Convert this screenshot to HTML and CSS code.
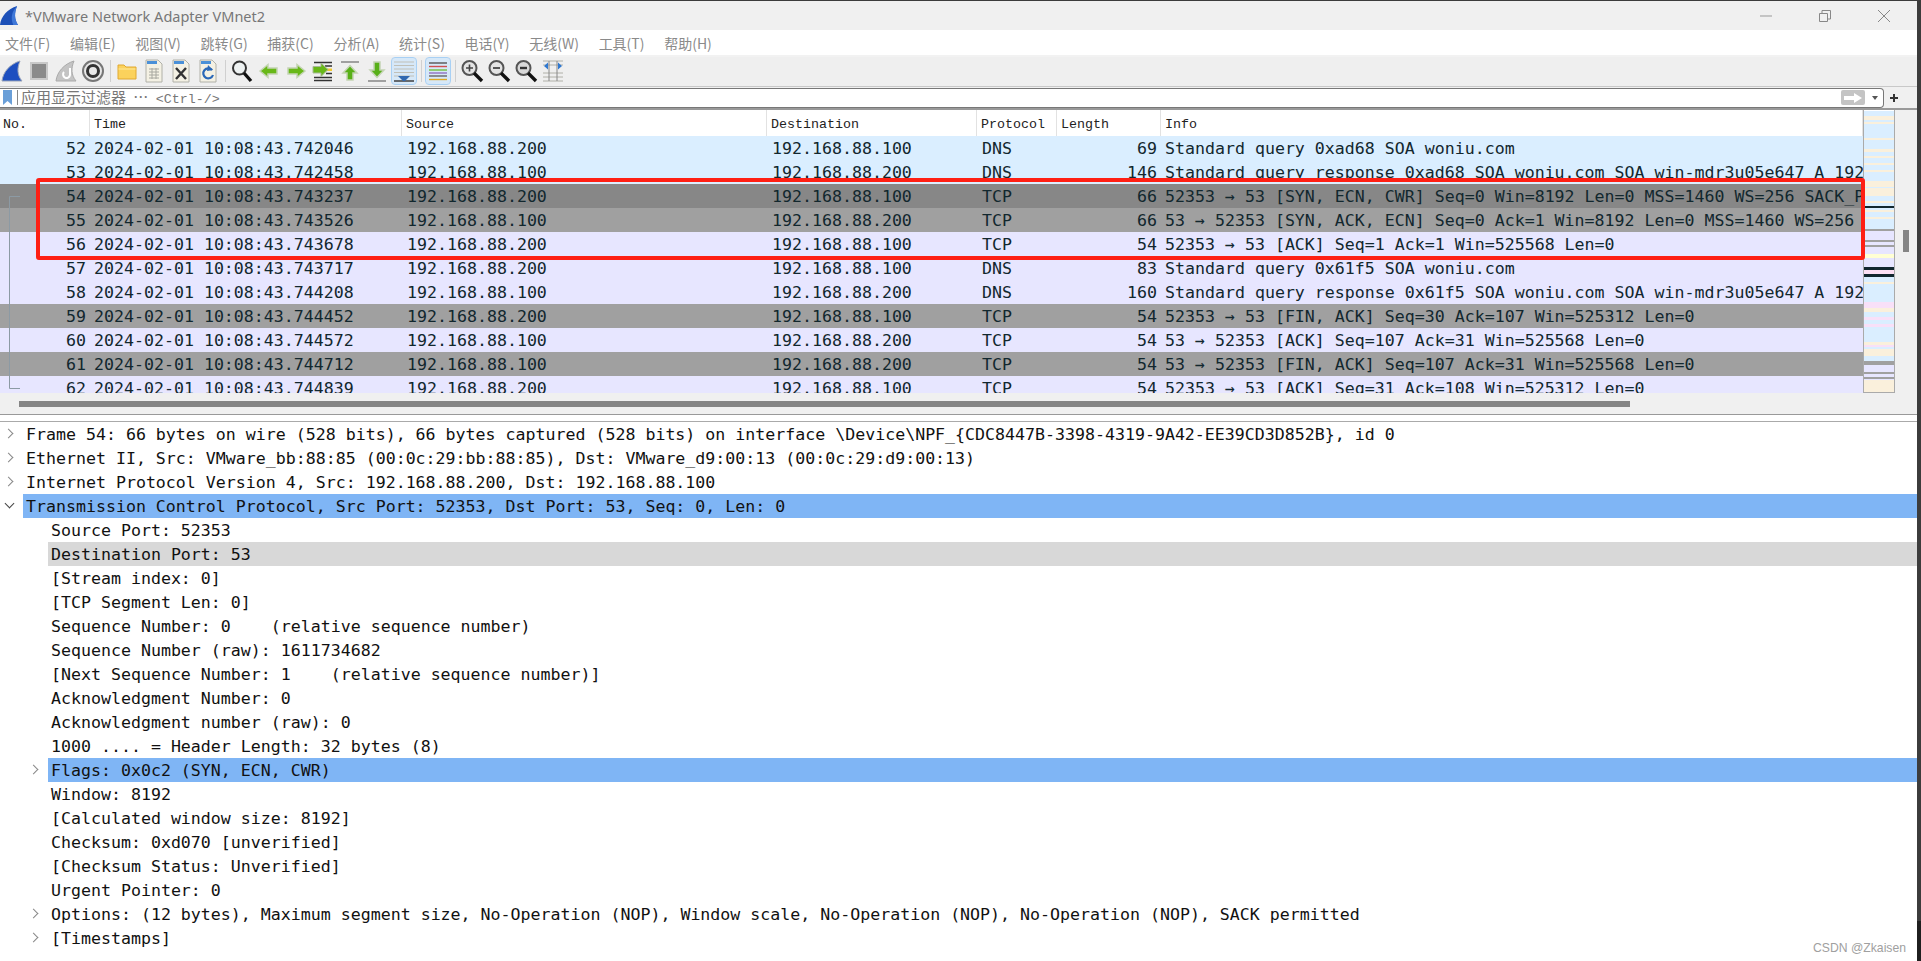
FILE: index.html
```html
<!DOCTYPE html>
<html>
<head>
    <title>VMware Network Adapter VMnet2</title>
    <link rel="stylesheet" href="styles.css">
</head>
<body>
<div class="window">
    <div class="titlebar">
        <svg class="app-icon" viewBox="0 0 20 22"><path d="M0 21C1 12 8 4 18 1C15 8 15 15 19 21Z" fill="#1c50b8"/><path d="M18 1C15 8 15 15 19 21H14C11 14 12 7 18 1Z" fill="#3f78d8"/></svg>
        <span class="title-text">*VMware Network Adapter VMnet2</span>
        <div class="win-controls">
            <svg viewBox="0 0 14 14"><path d="M1 7H13" stroke="#999" fill="none"/></svg>
            <svg viewBox="0 0 14 14"><path d="M1.5 4.5H9.5V12.5H1.5ZM4 4V1.5H12.5V10H10" stroke="#888" fill="none"/></svg>
            <svg viewBox="0 0 14 14"><path d="M1 1L13 13M13 1L1 13" stroke="#888" fill="none"/></svg>
        </div>
    </div>

    <div class="menubar">
        <span>文件(F)</span><span>编辑(E)</span><span>视图(V)</span><span>跳转(G)</span><span>捕获(C)</span><span>分析(A)</span><span>统计(S)</span><span>电话(Y)</span><span>无线(W)</span><span>工具(T)</span><span>帮助(H)</span>
    </div>

    <div class="toolbar">
        <svg class="ico" viewBox="0 0 24 24"><path d="M2 22C3 13 10 5 20 2C17 9 17 16 22 22Z" fill="#1d4fc0" stroke="#9aa4b8"/></svg>
        <svg class="ico" viewBox="0 0 24 24"><rect x="4" y="4" width="16" height="16" fill="#8a8a8a" stroke="#c8c8c8" stroke-width="2"/></svg>
        <svg class="ico" viewBox="0 0 24 24"><path d="M2 22C3 13 10 5 20 2C17 9 17 16 22 22Z" fill="#c4c4c4" stroke="#aaa"/><path d="M16 9V16A3.5 3.5 0 1 1 10 13" stroke="#fff" stroke-width="2" fill="none"/></svg>
        <svg class="ico" viewBox="0 0 24 24"><circle cx="12" cy="12" r="10" fill="#e8e8e8" stroke="#777" stroke-width="2"/><circle cx="12" cy="12" r="5.500" fill="#e8e8e8" stroke="#333" stroke-width="3"/></svg>
        <i class="sep"></i>
        <svg class="ico" viewBox="0 0 24 24"><path d="M3 6H9L11 8H21V20H3Z" fill="#fbd25c" stroke="#e0a830"/><path d="M3.500 10H20.500" stroke="#fde79a"/></svg>
        <svg class="ico" viewBox="0 0 24 24"><path d="M4 1H16L20 5V23H4Z" fill="#f4f1e4" stroke="#b0b0a8"/><path d="M5 2H15V5H5Z" fill="#4a90d8"/><path d="M7 10H17M7 13H17M7 16H17M7 19H17M10 9V20M14 9V20" stroke="#a8a8a0"/></svg>
        <svg class="ico" viewBox="0 0 24 24"><path d="M4 1H16L20 5V23H4Z" fill="#f4f1e4" stroke="#b0b0a8"/><path d="M5 2H15V5H5Z" fill="#4a90d8"/><path d="M7 9L17 20M17 9L7 20" stroke="#333" stroke-width="2.400"/></svg>
        <svg class="ico" viewBox="0 0 24 24"><path d="M4 1H16L20 5V23H4Z" fill="#f4f1e4" stroke="#b0b0a8"/><path d="M5 2H15V5H5Z" fill="#4a90d8"/><path d="M16 11A5 5 0 1 0 17 16" stroke="#2a68b8" stroke-width="2.200" fill="none"/><path d="M12 6L17 11L11 12Z" fill="#2a68b8"/></svg>
        <i class="sep"></i>
        <svg class="ico" viewBox="0 0 24 24"><circle cx="9.500" cy="9" r="6.500" fill="#eef2f2" stroke="#333" stroke-width="2"/><path d="M14 14L21 22" stroke="#111" stroke-width="3.400"/></svg>
        <svg class="ico" viewBox="0 0 24 24"><path d="M3 12L11 5.500V9H20V15H11V18.500Z" fill="#68b818" stroke="#c4d4b4" stroke-width="1.500"/></svg>
        <svg class="ico" viewBox="0 0 24 24"><path d="M21 12L13 5.500V9H4V15H13V18.500Z" fill="#68b818" stroke="#c4d4b4" stroke-width="1.500"/></svg>
        <svg class="ico" viewBox="0 0 24 24"><path d="M3 3.500H21M3 18.500H21M3 21.500H21M14 7H21M15 14.500H21" stroke="#333" stroke-width="1.400"/><path d="M16 9.500H21V12H16Z" fill="#f0c830"/><path d="M17 10.500L10 4V7.500H2V14H10V17.500Z" fill="#68b818" stroke="#a8b898"/></svg>
        <svg class="ico" viewBox="0 0 24 24"><path d="M3 3H21" stroke="#a0a0a0" stroke-width="2"/><path d="M12 6.500L19 14H15V21H9V14H5Z" fill="#58b018" stroke="#c4d4b4" stroke-width="1.500"/></svg>
        <svg class="ico" viewBox="0 0 24 24"><path d="M3 22H21" stroke="#a0a0a0" stroke-width="2"/><path d="M12 18.500L19 11H15V3H9V11H5Z" fill="#58b018" stroke="#c4d4b4" stroke-width="1.500"/></svg>
        <div class="tool-toggle auto-scroll">
            <svg class="ico" viewBox="0 0 24 24"><path d="M2 3H22M2 6.500H22M2 10H22M2 13.500H22M2 17H22" stroke="#c0c0b8"/><path d="M2 22H22" stroke="#333" stroke-width="1.400"/><path d="M11 22L6 17H18L13 22Z" fill="#3068b0"/></svg>
        </div>
        <i class="sep"></i>
        <div class="tool-toggle colorize">
            <svg class="ico" viewBox="0 0 24 24"><path d="M3 4H21" stroke="#555" stroke-width="1.400"/><path d="M3 7.500H21" stroke="#d05050" stroke-width="1.400"/><path d="M3 11H21" stroke="#70c040" stroke-width="1.400"/><path d="M3 14H21" stroke="#9070c0" stroke-width="1.400"/><path d="M3 17H21" stroke="#666" stroke-width="1.400"/><path d="M3 20.500H21" stroke="#e0a820" stroke-width="1.400"/></svg>
        </div>
        <i class="sep"></i>
        <svg class="ico" viewBox="0 0 24 24"><circle cx="9.500" cy="9" r="7" fill="#e4e4e4" stroke="#555" stroke-width="2"/><path d="M6 9H13M9.500 5.500V12.500" stroke="#444" stroke-width="1.600"/><path d="M14 14L22 22" stroke="#111" stroke-width="3.400"/></svg>
        <svg class="ico" viewBox="0 0 24 24"><circle cx="9.500" cy="9" r="7" fill="#e4e4e4" stroke="#555" stroke-width="2"/><path d="M6 9H13" stroke="#444" stroke-width="1.800"/><path d="M14 14L22 22" stroke="#111" stroke-width="3.400"/></svg>
        <svg class="ico" viewBox="0 0 24 24"><circle cx="9.500" cy="9" r="7" fill="#d8d8d8" stroke="#555" stroke-width="2"/><path d="M6 9H13" stroke="#333" stroke-width="2.400"/><path d="M14 14L22 22" stroke="#111" stroke-width="3.400"/></svg>
        <svg class="ico" viewBox="0 0 24 24"><path d="M2 2H22M2 22H22M2 6H22M2 18H22M2 14H22" stroke="#b0b0a8"/><path d="M8 2V22M16 2V22" stroke="#888"/><path d="M3 7L7 3.500V10.500Z M21 7L17 3.500V10.500Z" fill="#2f78d0"/></svg>
    </div>

    <div class="filter-row">
        <div class="filter-box">
            <svg class="bookmark" viewBox="0 0 9 15"><path d="M0 0H9V15L4.500 11L0 15Z" fill="#6a9fd8"/></svg>
            <span class="filter-hint"><span class="cjk">应用显示过滤器 ⋯ </span>&lt;Ctrl-/&gt;</span>
            <span class="apply-btn"><svg viewBox="0 0 18 10"><path d="M0 3H10V0L18 5L10 10V7H0Z" fill="#fff"/></svg></span>
            <i class="drop-arrow"></i>
        </div>
        <svg class="plus" viewBox="0 0 10 10"><path d="M5 1V9M1 5H9" stroke="#333" stroke-width="2"/></svg>
    </div>

    <div class="packet-pane">
        <div class="packet-main">
            <div class="pk-head">
                <span class="c-no">No.</span><span class="c-time">Time</span><span class="c-src">Source</span><span class="c-dst">Destination</span><span class="c-proto">Protocol</span><span class="c-len">Length</span><span class="c-info">Info</span>
            </div>
            <div class="pk-body">
                <div class="pk-row dns-blue"><span class="c-no">52</span><span class="c-time">2024-02-01 10:08:43.742046</span><span class="c-src">192.168.88.200</span><span class="c-dst">192.168.88.100</span><span class="c-proto">DNS</span><span class="c-len">69</span><span class="c-info">Standard query 0xad68 SOA woniu.com</span></div>
                <div class="pk-row dns-blue"><span class="c-no">53</span><span class="c-time">2024-02-01 10:08:43.742458</span><span class="c-src">192.168.88.100</span><span class="c-dst">192.168.88.200</span><span class="c-proto">DNS</span><span class="c-len">146</span><span class="c-info">Standard query response 0xad68 SOA woniu.com SOA win-mdr3u05e647 A 192.168.88.100</span></div>
                <div class="pk-row tcp-sel"><span class="c-no">54</span><span class="c-time">2024-02-01 10:08:43.743237</span><span class="c-src">192.168.88.200</span><span class="c-dst">192.168.88.100</span><span class="c-proto">TCP</span><span class="c-len">66</span><span class="c-info">52353 → 53 [SYN, ECN, CWR] Seq=0 Win=8192 Len=0 MSS=1460 WS=256 SACK_PERM</span></div>
                <div class="pk-row tcp-flag"><span class="c-no">55</span><span class="c-time">2024-02-01 10:08:43.743526</span><span class="c-src">192.168.88.100</span><span class="c-dst">192.168.88.200</span><span class="c-proto">TCP</span><span class="c-len">66</span><span class="c-info">53 → 52353 [SYN, ACK, ECN] Seq=0 Ack=1 Win=8192 Len=0 MSS=1460 WS=256</span></div>
                <div class="pk-row tcp"><span class="c-no">56</span><span class="c-time">2024-02-01 10:08:43.743678</span><span class="c-src">192.168.88.200</span><span class="c-dst">192.168.88.100</span><span class="c-proto">TCP</span><span class="c-len">54</span><span class="c-info">52353 → 53 [ACK] Seq=1 Ack=1 Win=525568 Len=0</span></div>
                <div class="pk-row tcp"><span class="c-no">57</span><span class="c-time">2024-02-01 10:08:43.743717</span><span class="c-src">192.168.88.200</span><span class="c-dst">192.168.88.100</span><span class="c-proto">DNS</span><span class="c-len">83</span><span class="c-info">Standard query 0x61f5 SOA woniu.com</span></div>
                <div class="pk-row tcp"><span class="c-no">58</span><span class="c-time">2024-02-01 10:08:43.744208</span><span class="c-src">192.168.88.100</span><span class="c-dst">192.168.88.200</span><span class="c-proto">DNS</span><span class="c-len">160</span><span class="c-info">Standard query response 0x61f5 SOA woniu.com SOA win-mdr3u05e647 A 192.168.88.100</span></div>
                <div class="pk-row tcp-flag"><span class="c-no">59</span><span class="c-time">2024-02-01 10:08:43.744452</span><span class="c-src">192.168.88.200</span><span class="c-dst">192.168.88.100</span><span class="c-proto">TCP</span><span class="c-len">54</span><span class="c-info">52353 → 53 [FIN, ACK] Seq=30 Ack=107 Win=525312 Len=0</span></div>
                <div class="pk-row tcp"><span class="c-no">60</span><span class="c-time">2024-02-01 10:08:43.744572</span><span class="c-src">192.168.88.100</span><span class="c-dst">192.168.88.200</span><span class="c-proto">TCP</span><span class="c-len">54</span><span class="c-info">53 → 52353 [ACK] Seq=107 Ack=31 Win=525568 Len=0</span></div>
                <div class="pk-row tcp-flag"><span class="c-no">61</span><span class="c-time">2024-02-01 10:08:43.744712</span><span class="c-src">192.168.88.100</span><span class="c-dst">192.168.88.200</span><span class="c-proto">TCP</span><span class="c-len">54</span><span class="c-info">53 → 52353 [FIN, ACK] Seq=107 Ack=31 Win=525568 Len=0</span></div>
                <div class="pk-row tcp"><span class="c-no">62</span><span class="c-time">2024-02-01 10:08:43.744839</span><span class="c-src">192.168.88.200</span><span class="c-dst">192.168.88.100</span><span class="c-proto">TCP</span><span class="c-len">54</span><span class="c-info">52353 → 53 [ACK] Seq=31 Ack=108 Win=525312 Len=0</span></div>
                <svg class="conv-line" viewBox="0 0 20 197"><path d="M20 .5H9.500V192.500H20" fill="none" stroke="#8c9aa4"/></svg>
            </div>
            <div class="h-scroll"><i class="h-thumb"></i></div>
        </div>
        <div class="minimap"></div>
        <div class="v-scroll"><i class="v-thumb"></i></div>
        <div class="red-mark"></div>
    </div>

    <div class="detail-pane">
        <div class="tr"><i class="chev right"></i><span>Frame 54: 66 bytes on wire (528 bits), 66 bytes captured (528 bits) on interface \Device\NPF_{CDC8447B-3398-4319-9A42-EE39CD3D852B}, id 0</span></div>
        <div class="tr"><i class="chev right"></i><span>Ethernet II, Src: VMware_bb:88:85 (00:0c:29:bb:88:85), Dst: VMware_d9:00:13 (00:0c:29:d9:00:13)</span></div>
        <div class="tr"><i class="chev right"></i><span>Internet Protocol Version 4, Src: 192.168.88.200, Dst: 192.168.88.100</span></div>
        <div class="tr picked"><i class="chev down"></i><span>Transmission Control Protocol, Src Port: 52353, Dst Port: 53, Seq: 0, Len: 0</span></div>
        <div class="tr sub"><i class="chev none"></i><span>Source Port: 52353</span></div>
        <div class="tr sub hover"><i class="chev none"></i><span>Destination Port: 53</span></div>
        <div class="tr sub"><i class="chev none"></i><span>[Stream index: 0]</span></div>
        <div class="tr sub"><i class="chev none"></i><span>[TCP Segment Len: 0]</span></div>
        <div class="tr sub"><i class="chev none"></i><span>Sequence Number: 0    (relative sequence number)</span></div>
        <div class="tr sub"><i class="chev none"></i><span>Sequence Number (raw): 1611734682</span></div>
        <div class="tr sub"><i class="chev none"></i><span>[Next Sequence Number: 1    (relative sequence number)]</span></div>
        <div class="tr sub"><i class="chev none"></i><span>Acknowledgment Number: 0</span></div>
        <div class="tr sub"><i class="chev none"></i><span>Acknowledgment number (raw): 0</span></div>
        <div class="tr sub"><i class="chev none"></i><span>1000 .... = Header Length: 32 bytes (8)</span></div>
        <div class="tr sub picked"><i class="chev right"></i><span>Flags: 0x0c2 (SYN, ECN, CWR)</span></div>
        <div class="tr sub"><i class="chev none"></i><span>Window: 8192</span></div>
        <div class="tr sub"><i class="chev none"></i><span>[Calculated window size: 8192]</span></div>
        <div class="tr sub"><i class="chev none"></i><span>Checksum: 0xd070 [unverified]</span></div>
        <div class="tr sub"><i class="chev none"></i><span>[Checksum Status: Unverified]</span></div>
        <div class="tr sub"><i class="chev none"></i><span>Urgent Pointer: 0</span></div>
        <div class="tr sub"><i class="chev right"></i><span>Options: (12 bytes), Maximum segment size, No-Operation (NOP), Window scale, No-Operation (NOP), No-Operation (NOP), SACK permitted</span></div>
        <div class="tr sub"><i class="chev right"></i><span>[Timestamps]</span></div>
    </div>
    <div class="watermark">CSDN @Zkaisen</div>
</div>
</body>
</html>
```

FILE: styles.css
```css
html, body {
    margin: 0;
    height: 100%;
    overflow: hidden;
    background: linear-gradient(to bottom, #3c3c3c 0 921px, #1f1f1f 921px);
}
.window {
    position: relative;
    width: 1917px;
    height: 960px;
    margin-top: 1px;
    background: #fff;
    overflow: hidden;
    font-family: "DejaVu Sans Mono", monospace;
    font-size: 16.6px;
    color: #111;
}

/* title + menu */
.titlebar {
    height: 29px;
    background: #f0f0f0;
    display: flex;
    align-items: center;
}
.app-icon {
    width: 19px;
    height: 21px;
    margin-left: 0;
}
.title-text {
    margin-left: 6px;
    font: 14.5px "Noto Sans", sans-serif;
    color: #777;
}
.win-controls {
    margin-left: auto;
    display: flex;
    gap: 45px;
    padding-right: 26px;
}
.win-controls svg {
    width: 14px;
    height: 14px;
}
.menubar {
    height: 25px;
    display: flex;
    align-items: center;
    padding-left: 5px;
    gap: 19.7px;
    font: 14px "Noto Sans CJK SC", sans-serif;
    color: #8a8a8a;
    border-bottom: 2px solid #f2f2f2;
}

/* toolbar */
.toolbar {
    height: 27px;
    padding-bottom: 2px;
    background: #efefef;
    display: flex;
    align-items: center;
    gap: 3px;
    border-bottom: 1px solid #c8c8c8;
}
.ico {
    width: 24px;
    height: 24px;
    flex: none;
    display: block;
}
.sep {
    width: 1px;
    height: 22px;
    margin: 0 1.5px;
    background: #d0d0d0;
}
.tool-toggle {
    width: 24px;
    height: 26px;
    display: flex;
    align-items: center;
    justify-content: center;
    background: #d6e8f8;
    outline: 1px solid #a8d0f4;
    border-radius: 3px;
}

/* filter */
.filter-row {
    height: 23px;
    background: #f0f0f0;
    display: flex;
    align-items: center;
    border-bottom: 2px solid #999;
    box-sizing: border-box;
}
.filter-box {
    flex: none;
    width: 1884px;
    height: 20px;
    box-sizing: border-box;
    display: flex;
    align-items: center;
    background: #fff;
    border: 1px solid #777;
    border-left: 0;
    border-radius: 0 4px 4px 0;
}
.bookmark {
    width: 9px;
    height: 15px;
    margin-left: 3px;
    padding-right: 5px;
    border-right: 1px solid #888;
}
.filter-hint {
    margin-left: 3px;
    font: 13.33px "Liberation Mono", monospace;
    color: #777;
    white-space: pre;
    position: relative;
    top: -1px;
}
.filter-hint .cjk {
    font: 15px "Noto Sans CJK SC", sans-serif;
    word-spacing: 4px;
}
.apply-btn {
    margin-left: auto;
    width: 24px;
    height: 15px;
    background: #c4c4c4;
    border-radius: 2px;
    display: flex;
    align-items: center;
    justify-content: center;
}
.apply-btn svg {
    width: 18px;
    height: 10px;
}
.drop-arrow {
    margin: 0 5px 0 7px;
    border-top: 4px solid #555;
    border-left: 3.5px solid transparent;
    border-right: 3.5px solid transparent;
}
.plus {
    width: 10px;
    height: 10px;
    margin-left: 5px;
}

/* packet list */
.packet-pane {
    position: relative;
    height: 305px;
    display: flex;
    background: #f0f0f0;
    border-bottom: 1px solid #999;
    box-sizing: border-box;
}
.packet-main {
    width: 1863px;
    flex: none;
}
.pk-head {
    height: 26px;
    display: flex;
    background: #fff;
    font: 13.33px "Liberation Mono", monospace;
    color: #222;
    align-items: stretch;
}
.pk-head span {
    display: flex;
    align-items: center;
    box-sizing: border-box;
    padding: 2px 0 0 4px;
    border-right: 1px solid #e2e2e2;
    white-space: nowrap;
}
.pk-head .c-no {
    padding-left: 3px;
}
.c-no { width: 90px; flex: none; }
.c-time { width: 312px; flex: none; }
.c-src { width: 365px; flex: none; }
.c-dst { width: 210px; flex: none; }
.c-proto { width: 80px; flex: none; }
.c-len { width: 104px; flex: none; }
.c-info { flex: 1; min-width: 0; overflow: hidden; }
.pk-body {
    position: relative;
    height: 257px;
    overflow: hidden;
}
.pk-row {
    height: 24px;
    line-height: 25px;
    display: flex;
    color: #12272e;
    white-space: pre;
}
.pk-row span {
    box-sizing: border-box;
    padding-left: 5px;
}
.pk-row .c-time {
    padding-left: 4px;
}
.pk-row .c-info {
    padding-left: 4px;
}
.pk-row .c-no, .pk-row .c-len {
    text-align: right;
    padding: 0 4px 0 0;
}
.dns-blue { background: #daeeff; }
.tcp { background: #e7e6ff; }
.tcp-flag { background: #a0a0a0; }
.tcp-sel { background: #878787; }
.conv-line {
    position: absolute;
    left: 0;
    top: 60px;
    width: 20px;
    height: 197px;
}
.h-scroll {
    height: 20px;
    background: #f0f0f0;
    padding: 8px 0 0 19px;
    box-sizing: border-box;
}
.h-thumb {
    display: block;
    width: 1611px;
    height: 6px;
    background: #858585;
}
.minimap {
    width: 32px;
    height: 283px;
    flex: none;
    box-sizing: border-box;
    border: 1px solid #aaa;
    border-top: 0;
    background: linear-gradient(to bottom,
        #fff 0 1px, #daeeff 1px 6px, #faf0dc 6px 10px, #daeeff 10px 12px, #faf0dc 12px 14px, #daeeff 14px 28px,
        #faf0dc 28px 30px, #daeeff 30px 39px, #faf0dc 39px 42px, #daeeff 42px 46px, #faf0dc 46px 48px, #daeeff 48px 53px,
        #faf0dc 53px 55px, #daeeff 55px 60px, #faf0dc 60px 62px, #daeeff 62px 71px, #faf0dc 71px 77px, #daeeff 77px 78px,
        #faf0dc 78px 86px, #daeeff 86px 91px, #faf0dc 91px 93px, #daeeff 93px 96px, #12272e 96px 98px, #daeeff 98px 100px,
        #faf0dc 100px 102px, #daeeff 102px 107px, #faf0dc 107px 109px, #daeeff 109px 119px, #a0a0a0 119px 121px,
        #e7e6ff 121px 130px, #a0a0a0 130px 132px, #e7e6ff 132px 135px, #a0a0a0 135px 137px, #e7e6ff 137px 144px,
        #ffffd4 144px 148px, #e7e6ff 148px 157px, #12272e 157px 160px, #fce0f4 160px 164px, #12272e 164px 167px,
        #daeeff 167px 172px, #faf0dc 172px 174px, #daeeff 174px 192px, #f8e0f8 192px 198px, #faf0dc 198px 202px,
        #daeeff 202px 207px, #f8e0f8 207px 210px, #daeeff 210px 214px, #f8e0f8 214px 217px, #daeeff 217px 232px,
        #faf0dc 232px 235px, #f8e0f8 235px 237px, #daeeff 237px 239px, #faf0dc 239px 246px, #daeeff 246px 251px,
        #a0a0a0 251px 255px, #e7e6ff 255px 262px, #a0a0a0 262px 264px, #e7e6ff 264px 267px, #a0a0a0 267px 269px,
        #e7e6ff 269px 270px, #faf0dc 270px 283px);
}
.v-scroll {
    flex: 1;
    display: flex;
    justify-content: center;
}
.v-thumb {
    display: block;
    width: 6px;
    height: 22px;
    margin-top: 120px;
    background: #858585;
}
.red-mark {
    position: absolute;
    left: 36px;
    top: 68px;
    width: 1829px;
    height: 82px;
    box-sizing: border-box;
    border: 4px solid #fe1f14;
    border-radius: 3px;
}

/* detail tree */
.detail-pane {
    border-top: 1px solid #aaa;
    margin-top: 6px;
}
.tr {
    height: 24px;
    line-height: 25px;
    display: flex;
    white-space: pre;
    padding-left: 0;
}
.tr.sub {
    padding-left: 25px;
}
.tr span {
    flex: 1;
    padding-left: 3px;
    background: transparent;
}
.chev {
    width: 23px;
    flex: none;
    position: relative;
}
.chev.right:before, .chev.down:before {
    content: "";
    position: absolute;
    left: 5px;
    top: 8px;
    width: 6px;
    height: 6px;
    border-top: 1.5px solid #888;
    border-right: 1.5px solid #888;
    transform: rotate(45deg);
}
.chev.down:before {
    left: 6px;
    top: 6px;
    border-color: #444;
    transform: rotate(135deg);
}
.picked span { background: #7fb5f5; }
.hover span { background: #d8d8d8; }
.watermark {
    position: absolute;
    right: 11px;
    bottom: 6px;
    font: 12.2px "Liberation Sans", sans-serif;
    color: #a0a0a0;
}
```
